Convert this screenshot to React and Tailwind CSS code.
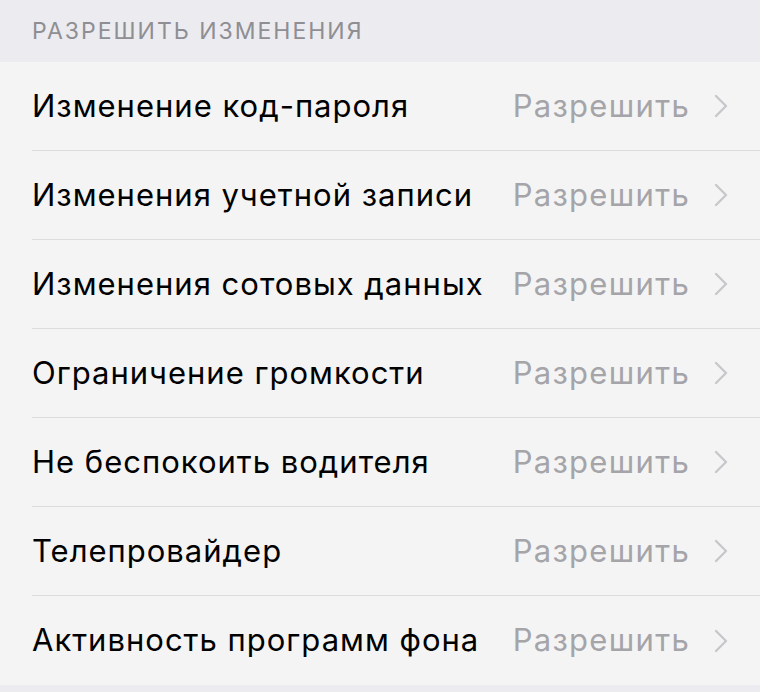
const rows = [
  "Изменение код-пароля",
  "Изменения учетной записи",
  "Изменения сотовых данных",
  "Ограничение громкости",
  "Не беспокоить водителя",
  "Телепровайдер",
  "Активность программ фона",
];

const Chevron = () => (
  <svg width="14" height="24" viewBox="0 0 14 24" fill="none" className="shrink-0">
    <path d="M2 2l10 10-10 10" stroke="#c7c7cc" strokeWidth="2.4" strokeLinecap="round" strokeLinejoin="round" />
  </svg>
);

export default function App() {
  return (
    <div className="w-[760px] h-[692px] bg-[#ebebf0] overflow-hidden" style={{ fontFamily: "Inter, 'Noto Sans', sans-serif" }}>
      <div className="h-[62px] flex items-center pl-[32px] text-[23px] text-[#8e8e93] uppercase tracking-[2px]">
        Разрешить изменения
      </div>
      <div className="bg-[#f4f4f4]">
        {rows.map((label, i) => (
          <div key={label} className="pl-[32px]">
            <div className={`h-[89px] flex items-center pr-[32px] ${i < rows.length - 1 ? "border-b border-[#dcdcdf]" : ""}`}>
              <span className="flex-1 text-[31px] text-black tracking-[1px]">{label}</span>
              <span className="text-[31px] text-[#a4a4a9] mr-[24px] tracking-[1.3px]">Разрешить</span>
              <Chevron />
            </div>
          </div>
        ))}
      </div>
    </div>
  );
}
